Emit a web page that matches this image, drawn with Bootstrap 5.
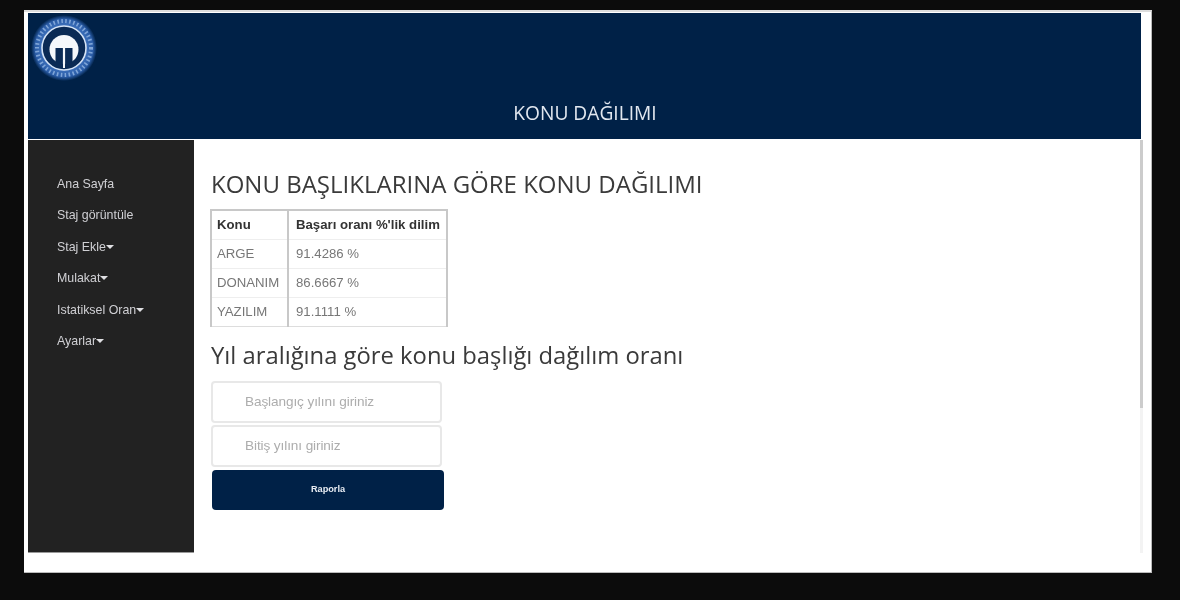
<!doctype html>
<html lang="tr">
<head>
<meta charset="utf-8">
<title>Konu Dağılımı</title>
<link href="https://cdn.jsdelivr.net/npm/bootstrap@5.3.0/dist/css/bootstrap.min.css" rel="stylesheet">
<style>
html,body{height:100%;}
body{background:#0c0c0c;overflow:hidden;padding:10px 28px 0 24px;font-family:"Liberation Sans",Arial,sans-serif;}
.shot-frame{height:563px;background:#fff;padding:1px 10px 20px 4px;border-right:1px solid #bbb;border-bottom:1px solid #bbb;border-top:2px solid #ddd;filter:blur(.75px);position:relative;}
.top-band{height:126px;background:#002147;padding:2px 0 0 3px;margin-bottom:1px;}
.brand-logo{width:66px;height:66px;display:block;}
.band-title{font-family:"Open Sans",sans-serif;font-size:19.2px;line-height:24px;color:#e2e8f0;text-align:center;margin:20px 0 0 0;padding-right:2px;}
.main-row{height:413px;}
.side-col{width:166px;background:#222;padding:37px 0 0 29px;border-bottom:1px solid #999;}
.side-link{display:block;color:#d0d0d4;font-size:12.4px;line-height:15px;margin-bottom:16.4px;text-decoration:none;}
.caret-mark{display:inline-block;border-left:4px solid transparent;border-right:4px solid transparent;border-top:4px solid #e0e0e3;vertical-align:2px;}
.page-body{padding:29px 0 0 17px;}
.page-h{font-family:"Open Sans",sans-serif;font-size:24px;line-height:30px;color:#3a3a3a;margin:0 0 10px;font-weight:400;}
.page-h2{font-size:23.8px;margin:13px 0 11px;}
.rate-table{border-collapse:collapse;border:2px solid #c8c8c8;border-bottom:1px solid #ddd;font-size:13.2px;color:#777;width:238px;margin-left:-1px;}
.rate-table th{color:#333;font-weight:700;height:29px;padding:0 5px;border-bottom:1px solid #eee;white-space:nowrap;}
.rate-table td{height:29px;padding:0 5px;border-top:1px solid #eee;white-space:nowrap;}
.rate-table th:first-child,.rate-table td:first-child{width:77px;border-right:2px solid #c8c8c8;}
.rate-table th:last-child,.rate-table td:last-child{padding-left:7px;}
.year-input.form-control{width:231px;height:42px;border:2px solid #e8e8e8;border-radius:4px;font-size:13.6px;color:#666;padding:0 0 0 32px;margin:0 0 2px 0;letter-spacing:-.1px;}
.year-input.form-control::placeholder{color:#adadad;opacity:1;}
.report-btn.btn{display:block;width:232px;height:40px;background:#002147;border:0;border-radius:4px;color:#e6ebf2;font-size:9.2px;font-weight:700;margin:3px 0 0 1px;padding:0;}
.scroll-thumb{position:absolute;left:1116px;top:128px;width:3px;height:268px;background:#ccc;}
.scroll-track{position:absolute;left:1116px;top:396px;width:3px;height:145px;background:#f3f3f3;}
</style>
</head>
<body>
<div class="shot-frame">
  <header class="top-band">
    <svg class="brand-logo" viewBox="0 0 66 66" aria-hidden="true">
      <defs>
        <radialGradient id="gl"><stop offset=".7" stop-color="#3a6db8"/><stop offset=".88" stop-color="#2a5ca6"/><stop offset="1" stop-color="#002147"/></radialGradient>
      </defs>
      <circle cx="33" cy="33" r="33" fill="url(#gl)"/>
      <circle cx="33" cy="33" r="27" fill="none" stroke="#7fa5d8" stroke-width="4" stroke-dasharray="1.6 2.4"/>
      <circle cx="33" cy="33" r="22" fill="#0a2a55" stroke="#d5e3f5" stroke-width="1.6"/>
      <circle cx="33" cy="34.5" r="14.5" fill="#f4f7fb"/>
      <rect x="24.5" y="33" width="7.4" height="18" fill="#0a2a55"/>
      <rect x="34.1" y="33" width="7.4" height="18" fill="#0a2a55"/>
      <rect x="32" y="31" width="2" height="22" fill="#f4f7fb"/>
    </svg>
    <p class="band-title">KONU DAĞILIMI</p>
  </header>
  <div class="d-flex main-row">
    <nav class="side-col flex-shrink-0">
      <a class="side-link" href="#">Ana Sayfa</a>
      <a class="side-link" href="#">Staj görüntüle</a>
      <a class="side-link" href="#">Staj Ekle<span class="caret-mark"></span></a>
      <a class="side-link" href="#">Mulakat<span class="caret-mark"></span></a>
      <a class="side-link" href="#">Istatiksel Oran<span class="caret-mark"></span></a>
      <a class="side-link" href="#">Ayarlar<span class="caret-mark"></span></a>
    </nav>
    <main class="page-body flex-grow-1">
      <h1 class="page-h">KONU BAŞLIKLARINA GÖRE KONU DAĞILIMI</h1>
      <table class="rate-table">
        <thead><tr><th>Konu</th><th>Başarı oranı %'lik dilim</th></tr></thead>
        <tbody>
          <tr><td>ARGE</td><td>91.4286 %</td></tr>
          <tr><td>DONANIM</td><td>86.6667 %</td></tr>
          <tr><td>YAZILIM</td><td>91.1111 %</td></tr>
        </tbody>
      </table>
      <h2 class="page-h page-h2">Yıl aralığına göre konu başlığı dağılım oranı</h2>
      <form>
        <input class="form-control year-input" type="text" placeholder="Başlangıç yılını giriniz">
        <input class="form-control year-input" type="text" placeholder="Bitiş yılını giriniz">
        <button class="btn report-btn" type="button">Raporla</button>
      </form>
    </main>
  </div>
  <div class="scroll-thumb"></div>
  <div class="scroll-track"></div>
</div>
<script src="https://cdn.jsdelivr.net/npm/bootstrap@5.3.0/dist/js/bootstrap.bundle.min.js"></script>
</body>
</html>
